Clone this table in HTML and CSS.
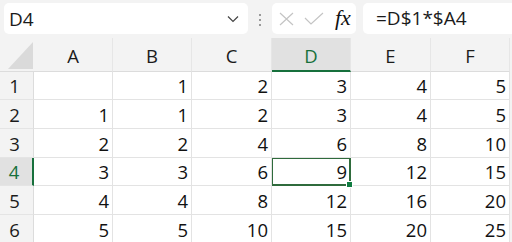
FILE: index.html
```html
<!DOCTYPE html>
<html lang="en">
<head>
  <meta charset="UTF-8">
  <title>Sheet</title>
  <link rel="stylesheet" href="styles.css">
</head>
<body>
  <div class="toolbar">
    <div class="name-box">
      <span>D4</span>
      <svg class="chevron" width="12" height="8" viewBox="0 0 12 8"><polyline points="1,1.5 6,6.5 11,1.5" fill="none" stroke="#444" stroke-width="1.2"/></svg>
    </div>
    <div class="grip"><i></i><i></i><i></i></div>
    <div class="fx-box">
      <svg width="15" height="14" viewBox="0 0 15 14"><path d="M1 1 L14 13 M14 1 L1 13" stroke="#c4c4c4" stroke-width="1.2" fill="none"/></svg>
      <svg width="20" height="13" viewBox="0 0 20 13"><polyline points="1,6 7,12 19,1" stroke="#c4c4c4" stroke-width="1.2" fill="none"/></svg>
      <span class="fx">fx</span>
    </div>
    <div class="formula">=D$1*$A4</div>
  </div>

  <div class="sheet">
    <div class="corner"><div class="tri"></div></div>
    <div class="col-head">A</div>
    <div class="col-head">B</div>
    <div class="col-head">C</div>
    <div class="col-head sel">D</div>
    <div class="col-head">E</div>
    <div class="col-head">F</div>

    <div class="row-head">1</div>
    <div class="cell"></div><div class="cell">1</div><div class="cell">2</div><div class="cell">3</div><div class="cell">4</div><div class="cell">5</div>

    <div class="row-head">2</div>
    <div class="cell">1</div><div class="cell">1</div><div class="cell">2</div><div class="cell">3</div><div class="cell">4</div><div class="cell">5</div>

    <div class="row-head">3</div>
    <div class="cell">2</div><div class="cell">2</div><div class="cell">4</div><div class="cell">6</div><div class="cell">8</div><div class="cell">10</div>

    <div class="row-head sel">4</div>
    <div class="cell">3</div><div class="cell">3</div><div class="cell">6</div><div class="cell active">9</div><div class="cell">12</div><div class="cell">15</div>

    <div class="row-head">5</div>
    <div class="cell">4</div><div class="cell">4</div><div class="cell">8</div><div class="cell">12</div><div class="cell">16</div><div class="cell">20</div>

    <div class="row-head">6</div>
    <div class="cell">5</div><div class="cell">5</div><div class="cell">10</div><div class="cell">15</div><div class="cell">20</div><div class="cell">25</div>
  </div>
</body>
</html>
```

FILE: styles.css
```css
body {
  margin: 0;
  background-color: #f3f3f3;
  font-family: "Open Sans", "Noto Sans", sans-serif;
  font-size: 18.5px;
  color: #1b1b1b;
  overflow: hidden;
  width: 512px;
  height: 242px;
}
.toolbar {
  display: flex;
  height: 38px;
  box-sizing: border-box;
  padding: 3px 0 0 4px;
  white-space: nowrap;
}
.toolbar > * {
  flex-shrink: 0;
}
.name-box {
  width: 244px;
  height: 31px;
  background-color: white;
  border-radius: 5px;
  display: flex;
  align-items: center;
  justify-content: space-between;
  box-sizing: border-box;
  padding: 0 9px 0 5px;
  font-size: 19px;
}
.chevron {
  margin-top: 1px;
}
.grip {
  width: 24px;
  display: flex;
  flex-direction: column;
  align-items: center;
  gap: 3px;
  padding-top: 11px;
  box-sizing: border-box;
}
.grip i {
  width: 2px;
  height: 2px;
  background-color: #9a9a9a;
}
.fx-box {
  width: 84px;
  height: 31px;
  background-color: white;
  border-radius: 5px;
  display: flex;
  align-items: center;
  box-sizing: border-box;
  padding-left: 7px;
  gap: 10px;
}
.fx {
  font-family: "Liberation Serif", serif;
  font-style: italic;
  font-size: 22px;
  color: #111;
  margin-left: 1px;
  margin-top: -2px;
}
.formula {
  margin-left: 7px;
  width: 149px;
  height: 31px;
  background-color: white;
  border-radius: 5px 0 0 5px;
  box-sizing: border-box;
  padding-left: 13px;
  line-height: 31px;
  font-size: 19px;
}
.sheet {
  display: grid;
  grid-template-columns: 34px 79px 79px 80px 79px 80px 79px;
  grid-template-rows: 34px 28px 29px 29px 28px 29px 29px;
}
.corner {
  display: flex;
  justify-content: flex-end;
  align-items: flex-end;
  padding: 0 1px 2px 0;
  border-bottom: 1px solid #dcdcdc;
  background-color: #f3f3f3;
}
.tri {
  width: 25px;
  height: 27px;
  background-color: #dadada;
  clip-path: polygon(100% 0, 100% 100%, 0 100%);
}
.col-head {
  background-color: #f3f3f3;
  border-bottom: 1px solid #dcdcdc;
  border-right: 1px solid #e6e6e6;
  display: flex;
  align-items: center;
  justify-content: center;
  padding-top: 2px;
}
.col-head.sel {
  background-color: #e1e1e1;
  color: #17703c;
  border-bottom: 2px solid #17703c;
}
.row-head {
  background-color: #f3f3f3;
  border-bottom: 1px solid #e4e4e4;
  border-right: 1px solid #dcdcdc;
  display: flex;
  align-items: center;
  justify-content: center;
  padding-right: 4px;
}
.row-head.sel {
  background-color: #e1e1e1;
  color: #17703c;
  border-right: 2px solid #17703c;
}
.cell {
  background-color: white;
  border-right: 1px solid #e3e3e3;
  border-bottom: 1px solid #e3e3e3;
  display: flex;
  align-items: center;
  justify-content: flex-end;
  padding-right: 3px;
  color: #111;
}
.cell.active {
  position: relative;
  box-shadow: inset 0 0 0 1px #2f6b3c;
  outline: 1px solid #2f6b3c;
  outline-offset: -1px;
}
.cell.active::after {
  content: "";
  position: absolute;
  right: -3px;
  bottom: -3px;
  width: 5px;
  height: 5px;
  background-color: #107c41;
  border: 1px solid white;
}
```
